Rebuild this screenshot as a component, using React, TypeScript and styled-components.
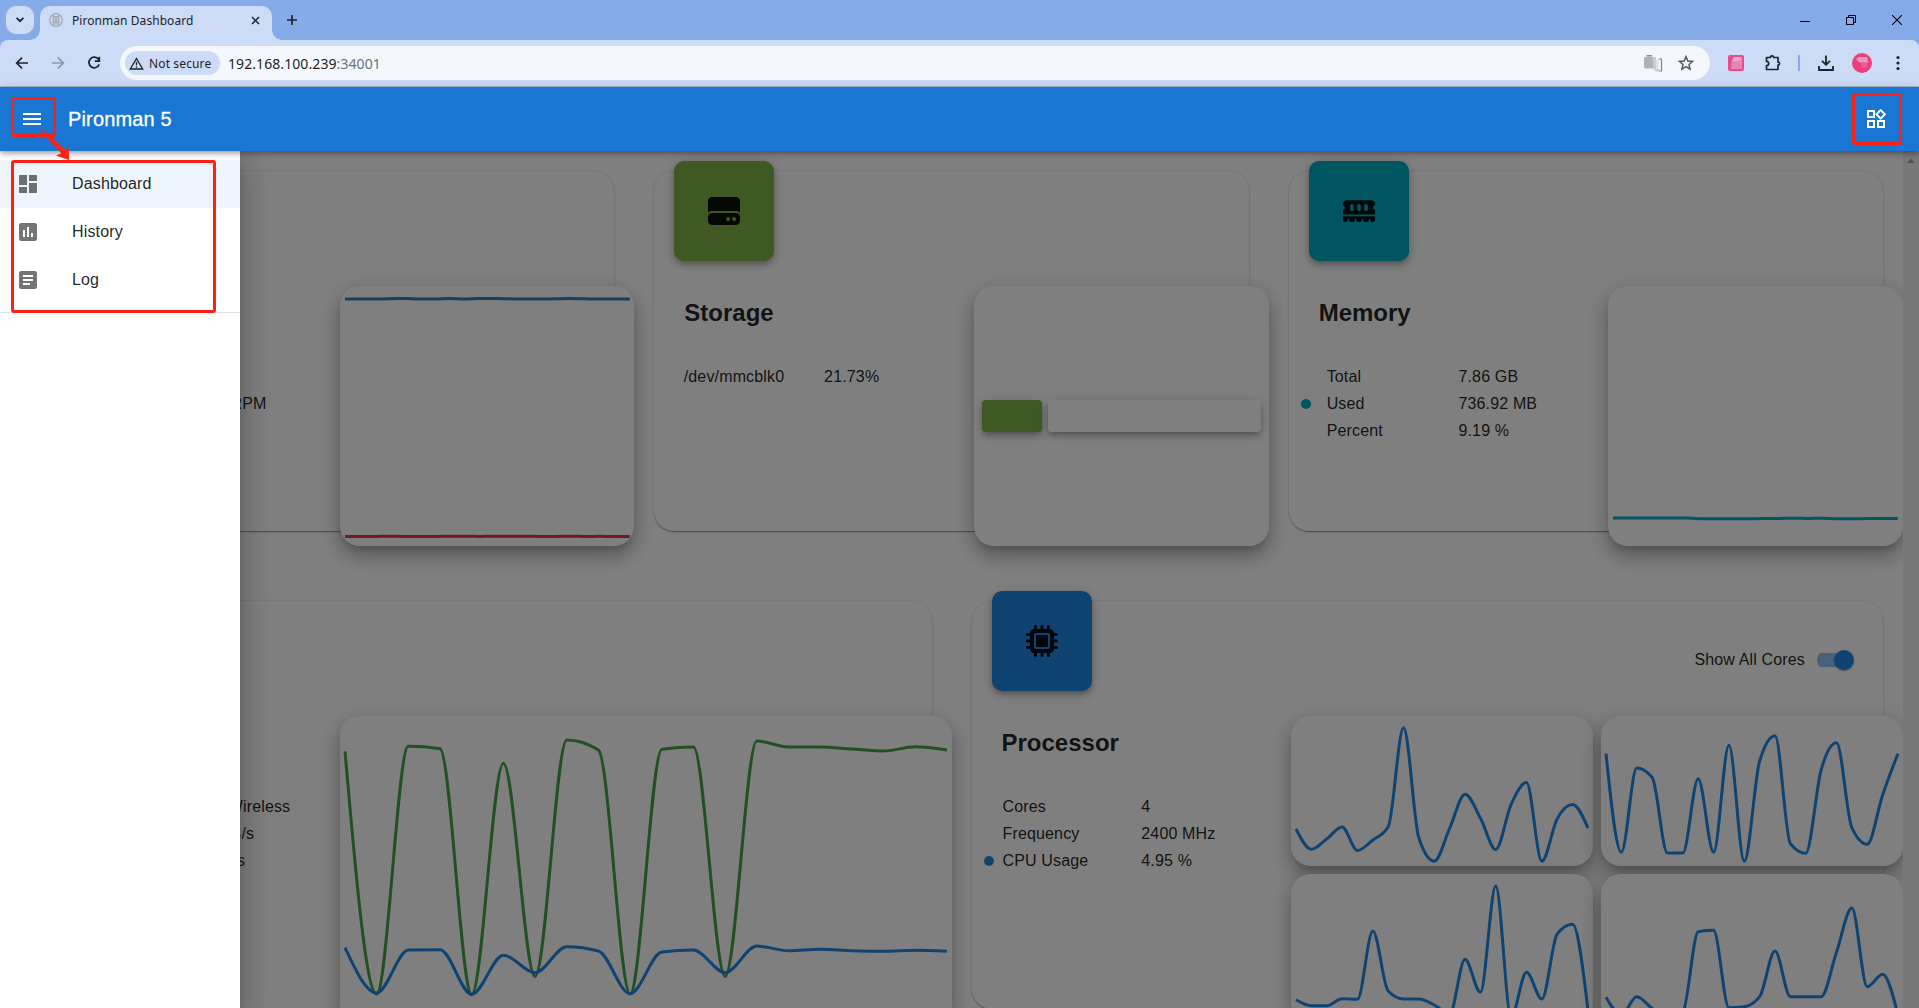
import React from "react";
import styled, { createGlobalStyle } from "styled-components";
import { FaHardDrive, FaMemory, FaMicrochip } from "react-icons/fa6";
import {
  MdArticle,
  MdAssessment,
  MdDashboard,
  MdMenu,
  MdOutlineWidgets,
} from "react-icons/md";

const palette = {
  frame: "#85abe9",
  toolbar: "#ccdcf6",
  omnibox: "#f4f8fd",
  ink: "#1f2329",
  primary: "#1976d2",
  blue: "#1e88e5",
  green: "#43a047",
  lime: "#7cb342",
  teal: "#00acc1",
  red: "#e53935",
  steel: "#2b82bd",
  mark: "#fe2113",
};

const elevation = {
  card: "0 2px 1px -1px rgba(0,0,0,.2), 0 1px 1px 0 rgba(0,0,0,.14), 0 1px 3px 0 rgba(0,0,0,.12)",
  paper: "0 2px 1px -1px rgba(0,0,0,.2), 0 1px 1px 0 rgba(0,0,0,.14), 0 1px 3px 0 rgba(0,0,0,.12), 0 0 2px 0 rgba(0,0,0,.12)",
  bar: "0 2px 4px -1px rgba(0,0,0,.2), 0 4px 5px 0 rgba(0,0,0,.14), 0 1px 10px 0 rgba(0,0,0,.12)",
  tile: "0 3px 5px -1px rgba(0,0,0,.2), 0 5px 8px 0 rgba(0,0,0,.14), 0 1px 14px 0 rgba(0,0,0,.12)",
  chart: "0 7px 8px -4px rgba(0,0,0,.2), 0 12px 17px 2px rgba(0,0,0,.14), 0 5px 22px 4px rgba(0,0,0,.12)",
  drawer: "0 8px 10px -5px rgba(0,0,0,.2), 0 16px 24px 2px rgba(0,0,0,.14), 0 6px 30px 5px rgba(0,0,0,.12)",
};

const GlobalStyle = createGlobalStyle`
  * { box-sizing: border-box; }
  body {
    margin: 0;
    overflow: hidden;
    font-family: "Liberation Sans", Arial, sans-serif;
  }
`;

const Screen = styled.div`
  position: relative;
  display: flex;
  flex-direction: column;
  width: 1919px;
  height: 1008px;
  overflow: hidden;
  background: #fff;
`;

/* ---------- browser window ---------- */

const BrowserFrame = styled.header`
  flex: none;
  height: 87px;
  background: ${palette.frame};
  font-family: "Noto Sans", "Open Sans", sans-serif;
  color: ${palette.ink};
`;

const TabStrip = styled.div`
  display: flex;
  align-items: center;
  height: 40px;
  padding-left: 6px;
`;

const TabSearch = styled.div`
  display: grid;
  place-items: center;
  width: 28px;
  height: 28px;
  border-radius: 10px;
  background: ${palette.toolbar};
`;

const Tab = styled.div`
  position: relative;
  display: flex;
  align-items: center;
  align-self: flex-end;
  width: 232px;
  height: 34px;
  margin-left: 6px;
  padding: 0 12px 6px 9px;
  border-radius: 10px 10px 0 0;
  background: ${palette.toolbar};

  &::before,
  &::after {
    content: "";
    position: absolute;
    bottom: 0;
    width: 10px;
    height: 10px;
  }
  &::before {
    left: -10px;
    background: radial-gradient(circle at 0 0, transparent 9.5px, ${palette.toolbar} 10px);
  }
  &::after {
    right: -10px;
    background: radial-gradient(circle at 100% 0, transparent 9.5px, ${palette.toolbar} 10px);
  }
`;

const TabTitle = styled.span`
  flex: 1;
  margin-left: 9px;
  padding-top: 1px;
  font-size: 12px;
  line-height: 16px;
  letter-spacing: 0.06px;
  white-space: nowrap;
`;

const NewTab = styled.div`
  display: grid;
  margin-left: 14px;
`;

const WindowControls = styled.div`
  display: flex;
  align-items: center;
  gap: 36px;
  margin-left: auto;
  padding-right: 17px;
`;

const AddressRow = styled.div`
  display: flex;
  align-items: center;
  height: 47px;
  padding: 0 12px 0 13px;
  border-bottom: 1px solid #aab6cb;
  border-radius: 8px 8px 0 0;
  background: ${palette.toolbar};
`;

const NavButtons = styled.div`
  display: flex;
  gap: 18px;
`;

const Omnibox = styled.div`
  display: flex;
  align-items: center;
  width: 1590px;
  height: 34px;
  margin-left: 17px;
  padding: 0 15px 0 5px;
  border-radius: 17px;
  background: ${palette.omnibox};
`;

const SecurityChip = styled.div`
  display: flex;
  align-items: center;
  gap: 5px;
  width: 95px;
  height: 24px;
  padding-left: 4px;
  border-radius: 12px;
  background: ${palette.toolbar};
  font-size: 12px;
  letter-spacing: 0.13px;
  white-space: nowrap;
`;

const Url = styled.span`
  flex: 1;
  margin-left: 8px;
  font-size: 14px;
  letter-spacing: 0.08px;
`;

const Port = styled.span`
  color: #6b7078;
`;

const OmniboxIcons = styled.div`
  display: flex;
  align-items: center;
  gap: 14px;
`;

const Extensions = styled.div`
  display: flex;
  align-items: center;
  margin-left: 18px;
`;

const ExtensionBadge = styled.div`
  display: grid;
  place-items: center;
  width: 16px;
  height: 16px;
  border-radius: 2px;
  background: #e94b8b;
`;

const PuzzleSlot = styled.div`
  display: grid;
  margin-left: 20px;
`;

const ToolDivider = styled.div`
  width: 2px;
  height: 16px;
  margin-left: 16px;
  background: ${palette.frame};
`;

const DownloadSlot = styled.div`
  display: grid;
  margin-left: 17px;
`;

const Avatar = styled.div`
  display: grid;
  place-items: center;
  width: 20px;
  height: 20px;
  margin-left: 17px;
  border-radius: 50%;
  background: #ee3f7c;
`;

const KebabSlot = styled.div`
  display: grid;
  margin-left: 18px;
`;

/* ---------- app bar ---------- */

const AppBar = styled.nav`
  position: relative;
  z-index: 4;
  flex: none;
  display: flex;
  align-items: center;
  height: 64px;
  padding: 0 31px 0 20px;
  background: ${palette.primary};
  box-shadow: ${elevation.bar};
  color: #fff;
`;

const AppTitle = styled.h1`
  flex: 1;
  margin: 0 0 0 24px;
  font-size: 20px;
  font-weight: 500;
  line-height: 32px;
  letter-spacing: 0.15px;
  -webkit-text-stroke: 0.3px #fff;
`;

/* ---------- page ---------- */

const Page = styled.div`
  position: relative;
  flex: 1;
  display: flex;
  min-height: 0;
  overflow: hidden;
`;

const Dashboard = styled.main`
  display: flex;
  flex-direction: column;
  gap: 70px;
  width: 1903px;
  height: 857px;
  padding: 20px 20px 0;
  overflow: hidden;
`;

const CardRow = styled.section<{ $columns: number }>`
  flex: none;
  display: grid;
  grid-template-columns: repeat(${(p) => p.$columns}, minmax(0, 1fr));
  column-gap: 40px;
`;

const CardBox = styled.article`
  display: flex;
  flex-direction: column;
  border-radius: 20px;
  background: #fff;
  box-shadow: ${elevation.paper};
  color: rgba(0, 0, 0, 0.87);
`;

const CardHead = styled.div`
  display: flex;
  justify-content: space-between;
  height: 115px;
  padding: 0 20px;
`;

const Tile = styled.div<{ $color: string }>`
  display: grid;
  place-items: center;
  width: 100px;
  height: 100px;
  margin-top: -10px;
  border-radius: 10px;
  background: ${(p) => p.$color};
  box-shadow: ${elevation.tile};
  color: rgba(0, 0, 0, 0.9);

  svg {
    width: auto;
    height: 32px;
  }
`;

const CardBody = styled.div`
  flex: 1;
  display: grid;
  grid-template-columns: 319.6px minmax(0, 1fr);
  margin: 0 -20px -15px 0;
`;

const Summary = styled.div`
  padding-top: 11px;
`;

const CardTitle = styled.h2`
  height: 32px;
  margin: 0 0 34px 30px;
  font-size: 24px;
  font-weight: 700;
  line-height: 32px;
`;

const Stat = styled.div<{ $inset: number }>`
  display: grid;
  grid-template-columns: ${(p) => p.$inset - 12}px ${(p) => 169.8 - p.$inset}px 1fr;
  align-items: center;
  height: 27px;
  padding-left: 12px;
  font-size: 16px;
  line-height: 27px;
  letter-spacing: 0.15px;
  white-space: nowrap;
`;

const Dot = styled.i<{ $color?: string }>`
  width: 10px;
  height: 10px;
  border-radius: 50%;
  background: ${(p) => p.$color ?? "transparent"};
`;

const ChartPanel = styled.div<{ $height?: number }>`
  height: ${(p) => (p.$height ? `${p.$height}px` : "100%")};
  border-radius: 20px;
  background: #fff;
  box-shadow: ${elevation.chart};
  overflow: hidden;

  svg {
    display: block;
  }
`;

const StoragePanel = styled(ChartPanel)`
  display: flex;
  align-items: center;
  gap: 6px;
  padding: 0 8px;
`;

const UsageBlock = styled.div<{ $color: string; $grow: number }>`
  flex: ${(p) => p.$grow} 1 0;
  height: 32px;
  border-radius: 4px;
  background: ${(p) => p.$color};
  box-shadow: ${elevation.tile};
`;

const CoreGrid = styled.div`
  display: grid;
  grid-template-columns: 1fr 1fr;
  gap: 8px;
`;

const ToggleRow = styled.div`
  display: flex;
  align-items: center;
  align-self: flex-start;
  gap: 12px;
  height: 38px;
  margin-top: 40px;
  padding-right: 9px;
  font-size: 16px;
  letter-spacing: 0.15px;
`;

const SwitchTrack = styled.div`
  display: flex;
  align-items: center;
  justify-content: flex-end;
  width: 37px;
  height: 20px;
  border-radius: 10px;
  background: linear-gradient(rgba(30, 136, 229, 0.5), rgba(30, 136, 229, 0.5)) 0 3px / 34px 14px no-repeat;
`;

const SwitchThumb = styled.div`
  width: 20px;
  height: 20px;
  border-radius: 50%;
  background: ${palette.blue};
  box-shadow: ${elevation.card};
`;

const ScrollTrack = styled.div`
  display: flex;
  justify-content: center;
  width: 16px;
  padding-top: 7px;
  background: #f1f1f1;
`;

const Backdrop = styled.div`
  position: absolute;
  inset: 0;
  z-index: 2;
  background: rgba(0, 0, 0, 0.5);
`;

const Drawer = styled.aside`
  position: absolute;
  inset: 0 auto 0 0;
  z-index: 3;
  width: 240px;
  background: #fff;
  box-shadow: ${elevation.drawer};
`;

const DrawerList = styled.ul`
  margin: 0;
  padding: 9px 0 8px;
  border-bottom: 1px solid rgba(0, 0, 0, 0.12);
  list-style: none;
`;

const DrawerItem = styled.li<{ $active?: boolean }>`
  display: flex;
  align-items: center;
  gap: 32px;
  height: 48px;
  padding: 0 16px;
  background: ${(p) => (p.$active ? "rgba(25, 118, 210, 0.08)" : "transparent")};
  color: rgba(0, 0, 0, 0.87);
  font-size: 16px;
  line-height: 24px;
  letter-spacing: 0.15px;

  svg {
    color: rgba(0, 0, 0, 0.54);
  }
`;

/* ---------- call-outs drawn over the window ---------- */

const Callout = styled.div<{ $x: number; $y: number; $w: number; $h: number }>`
  position: absolute;
  z-index: 6;
  left: ${(p) => p.$x}px;
  top: ${(p) => p.$y}px;
  width: ${(p) => p.$w}px;
  height: ${(p) => p.$h}px;
  border: 3px solid ${palette.mark};
  border-radius: 3px;
`;

const CalloutArrow = styled.svg`
  position: absolute;
  z-index: 6;
  left: 36px;
  top: 124px;
`;

/* ---------- charts ---------- */

type Point = [number, number];

/** Monotone cubic interpolation along x, so peaks never overshoot their samples. */
function monotonePath(points: Point[]): string {
  const n = points.length;
  const slope = points
    .slice(1)
    .map((p, i) => (p[1] - points[i][1]) / (p[0] - points[i][0]));
  const tangent: number[] = new Array(n).fill(0);
  for (let i = 1; i < n - 1; i++) {
    const a = slope[i - 1];
    const b = slope[i];
    const mean = (a + b) / 2;
    tangent[i] =
      (Math.sign(a) + Math.sign(b)) *
      Math.min(Math.abs(a), Math.abs(b), 0.5 * Math.abs(mean));
  }
  tangent[0] = (3 * slope[0] - tangent[1]) / 2;
  tangent[n - 1] = (3 * slope[n - 2] - tangent[n - 2]) / 2;

  let d = `M${points[0][0]},${points[0][1]}`;
  for (let i = 1; i < n; i++) {
    const [x0, y0] = points[i - 1];
    const [x1, y1] = points[i];
    const dx = (x1 - x0) / 3;
    d += `C${x0 + dx},${y0 + dx * tangent[i - 1]} ${x1 - dx},${y1 - dx * tangent[i]} ${x1},${y1}`;
  }
  return d;
}

interface Series {
  color: string;
  values: number[];
}

function LineChart({ width, height, series }: { width: number; height: number; series: Series[] }) {
  return (
    <svg width={width} height={height} fill="none">
      {series.map((s, i) => (
        <path
          key={i}
          stroke={s.color}
          strokeWidth={3}
          d={monotonePath(
            s.values.map((v, k): Point => [
              5 + ((width - 10) * k) / (s.values.length - 1),
              v,
            ]),
          )}
        />
      ))}
    </svg>
  );
}

const temperature: Series[] = [
  { color: palette.steel, values: [13, 13, 13, 12.8, 12.4, 13, 13, 12.4, 13, 12.6, 12.6, 12.8, 13, 13, 12.8, 12.6, 12.8, 13, 13, 13] },
  { color: palette.red, values: [250.5, 250.5, 250.5, 250.2, 250.5, 250.5, 250.5, 250.2, 250.2, 250.5, 250.2, 250.2, 250.2, 250.5, 250.5, 250.2, 250.5, 250.3, 250.5, 250.5] },
];

const memoryUse: Series[] = [
  { color: palette.teal, values: [232, 232, 232, 232, 232, 232, 232.8, 232.8, 232.8, 232.8, 232.5, 232.5, 232.2, 232.5, 232.2, 232.8, 232.8, 232.5, 232.5, 232.5] },
];

const traffic: Series[] = [
  { color: palette.green, values: [35.3, 278, 30.3, 32.7, 278.7, 47.3, 260.5, 24, 34, 278, 33.3, 31, 260.5, 25, 31, 31, 33, 35, 30.7, 34] },
  { color: palette.blue, values: [231.7, 277, 234, 233.7, 278.3, 239.3, 256.7, 230.7, 235, 277.7, 236, 234, 256.7, 230, 234.7, 233.3, 234.7, 235.3, 234.3, 235.3] },
];

const cores: number[][] = [
  [113, 133.3, 123, 111, 134.5, 124, 110.7, 11.7, 122.3, 145.2, 112.3, 78.3, 102, 133.5, 88.3, 66.5, 145.2, 102.7, 88.5, 112],
  [37.7, 136.3, 52, 61.3, 137, 137, 62.7, 136.3, 29.3, 145.3, 45, 19.7, 127.7, 137.3, 54, 26.7, 111.7, 128.3, 79, 37.7],
  [125.7, 131.7, 131.7, 124.7, 125.3, 57, 117, 125, 125, 131, 140, 85.3, 118.3, 12, 143, 98.3, 125, 60, 50.3, 136],
  [123.3, 141, 122.7, 134.3, 144, 138, 57.7, 56.3, 133.7, 132.7, 122.7, 77, 122.7, 122.7, 122.7, 78.3, 34, 112.7, 100.3, 141],
];

/* ---------- cards ---------- */

interface StatData {
  label?: string;
  value: string;
  dot?: string;
}

interface CardProps {
  icon?: React.ReactNode;
  color?: string;
  title?: string;
  inset?: number;
  stats: StatData[];
  action?: React.ReactNode;
  children: React.ReactNode;
}

function Card({ icon, color, title, inset = 29.4, stats, action, children }: CardProps) {
  return (
    <CardBox>
      <CardHead>
        {color && <Tile $color={color}>{icon}</Tile>}
        {action}
      </CardHead>
      <CardBody>
        <Summary>
          <CardTitle>{title}</CardTitle>
          {stats.map((s, i) => (
            <Stat key={i} $inset={inset}>
              <Dot $color={s.dot} />
              <span>{s.label}</span>
              <span>{s.value}</span>
            </Stat>
          ))}
        </Summary>
        {children}
      </CardBody>
    </CardBox>
  );
}

/* ---------- browser glyphs ---------- */

const Globe = () => (
  <svg width="14" height="14" viewBox="0 0 14 14" fill="none" stroke="#a3a9b1" strokeWidth="1.2">
    <circle cx="7" cy="7" r="6.3" />
    <path d="M4.2 1.6V12.4M9.8 1.6V12.4M7 3V11.5M4.2 3.6H9.8M4.2 6.2H9.8M4.2 8.6H9.8M5 11H9" />
  </svg>
);

function BrowserChrome() {
  return (
    <BrowserFrame>
      <TabStrip>
        <TabSearch>
          <svg width="8" height="6" viewBox="0 0 8 6" fill="none" stroke={palette.ink} strokeWidth="1.8">
            <path d="M.6.9 4 4.2 7.4.9" />
          </svg>
        </TabSearch>
        <Tab>
          <Globe />
          <TabTitle>Pironman Dashboard</TabTitle>
          <svg width="9" height="9" viewBox="0 0 9 9" stroke={palette.ink} strokeWidth="1.5">
            <path d="M1 1 8 8M8 1 1 8" />
          </svg>
        </Tab>
        <NewTab>
          <svg width="12" height="12" viewBox="0 0 12 12" stroke={palette.ink} strokeWidth="1.7">
            <path d="M6 1V11M1 6H11" />
          </svg>
        </NewTab>
        <WindowControls>
          <svg width="10" height="11" viewBox="0 0 10 11" stroke="#000">
            <path d="M0 6.5H10" />
          </svg>
          <svg width="10" height="10" viewBox="0 0 10 10" fill="none" stroke="#000">
            <path d="M.5 2.5H7.5V9.5H.5ZM2.5 2.5V.5H9.5V7.5H7.5" />
          </svg>
          <svg width="10" height="10" viewBox="0 0 10 10" stroke="#000" strokeWidth="1.1">
            <path d="M0 0 10 10M10 0 0 10" />
          </svg>
        </WindowControls>
      </TabStrip>
      <AddressRow>
        <NavButtons>
          <svg width="18" height="18" viewBox="0 0 18 18" fill="none" stroke={palette.ink} strokeWidth="1.7">
            <path d="M15 9H4.2M9 3.7 3.7 9 9 14.3" />
          </svg>
          <svg width="18" height="18" viewBox="0 0 18 18" fill="none" stroke="#8c97a8" strokeWidth="1.7">
            <path d="M3 9H13.8M9 3.7 14.3 9 9 14.3" />
          </svg>
          <svg width="18" height="18" viewBox="0 0 18 18" fill="none" stroke={palette.ink} strokeWidth="1.7">
            <path d="M13.6 5.4A5.3 5.3 0 1 0 14.2 10.4M14.3 2.8V7.2H9.8" />
          </svg>
        </NavButtons>
        <Omnibox>
          <SecurityChip>
            <svg width="15" height="13" viewBox="0 0 15 13" fill="none" stroke={palette.ink} strokeWidth="1.3">
              <path d="M7.5 1.6 13.7 12H1.3ZM7.5 5V8.3M7.5 9.3V10.7" />
            </svg>
            Not secure
          </SecurityChip>
          <Url>
            192.168.100.239<Port>:34001</Port>
          </Url>
          <OmniboxIcons>
            <svg width="19" height="17" viewBox="0 0 19 17" fill="none">
              <path d="M2.5 .8H8" stroke="#6b7078" strokeWidth="1.2" />
              <path d="M1 2H9L12 13.5H2Q0 13.5 0 12V3Q0 2 1 2Z" fill="#adb3b9" />
              <path d="M9 2H12V14H15V16.5H12L9 13.5Z" fill="#c9ced4" />
              <path d="M12 5H14.5V14H12Z" fill="#dfe3e8" />
              <path d="M14.5 4H17.5V16H15" stroke="#83898f" strokeWidth="1.2" />
            </svg>
            <svg width="18" height="18" viewBox="0 0 18 18" fill="none" stroke="#54585e" strokeWidth="1.5">
              <path d="M9 2.6 10.9 7 15.6 7.4 12 10.5 13.1 15.1 9 12.6 4.9 15.1 6 10.5 2.4 7.4 7.1 7Z" />
            </svg>
          </OmniboxIcons>
        </Omnibox>
        <Extensions>
          <ExtensionBadge>
            <svg width="14" height="14" viewBox="0 0 14 14">
              <path d="M3 5 7 1H13V13H2Z" fill="#e884b4" />
              <path d="M5 1H12V4L9 5H4L2 7Z" fill="#dda9cf" />
            </svg>
          </ExtensionBadge>
          <PuzzleSlot>
            <svg width="18" height="18" viewBox="0 0 18 18" fill="none" stroke={palette.ink} strokeWidth="1.7">
              <path d="M2.5 3.5H6.3A1.7 1.7 0 0 1 9.7 3.5H14V8A1.6 1.6 0 0 1 14 11.2V15.5H2.5V11.7A2.2 2.2 0 0 0 2.5 7.3Z" strokeLinejoin="round" />
            </svg>
          </PuzzleSlot>
          <ToolDivider />
          <DownloadSlot>
            <svg width="18" height="18" viewBox="0 0 18 18" fill="none" stroke={palette.ink} strokeWidth="1.8">
              <path d="M9 1.5V10.5M5 6.8 9 10.8 13 6.8M2 12V16H16V12" />
            </svg>
          </DownloadSlot>
          <Avatar>
            <svg width="16" height="16" viewBox="0 0 16 16">
              <path d="M2 4 5 2H13L14 8H8L5 7Z" fill="#e79ac4" />
              <path d="M7 7H13V12L8 13Z" fill="#ea5d96" />
            </svg>
          </Avatar>
          <KebabSlot>
            <svg width="16" height="16" viewBox="0 0 16 16" fill={palette.ink}>
              <circle cx="8" cy="2.5" r="1.6" />
              <circle cx="8" cy="8" r="1.6" />
              <circle cx="8" cy="13.5" r="1.6" />
            </svg>
          </KebabSlot>
        </Extensions>
      </AddressRow>
    </BrowserFrame>
  );
}

export default function App() {
  return (
    <>
      <GlobalStyle />
      <Screen>
        <BrowserChrome />
        <AppBar>
          <MdMenu size={24} />
          <AppTitle>Pironman 5</AppTitle>
          <MdOutlineWidgets size={24} />
        </AppBar>
        <Page>
          <Dashboard>
            <CardRow $columns={3}>
              <Card stats={[{ value: "" }, { value: "2929 RPM" }]}>
                <ChartPanel $height={260}>
                  <LineChart width={294.73} height={260} series={temperature} />
                </ChartPanel>
              </Card>
              <Card
                icon={<FaHardDrive />}
                color={palette.lime}
                title="Storage"
                stats={[{ label: "/dev/mmcblk0", value: "21.73%" }]}
              >
                <StoragePanel $height={260}>
                  <UsageBlock $color={palette.lime} $grow={22} />
                  <UsageBlock $color="#fff" $grow={78} />
                </StoragePanel>
              </Card>
              <Card
                icon={<FaMemory />}
                color={palette.teal}
                title="Memory"
                inset={38}
                stats={[
                  { label: "Total", value: "7.86 GB" },
                  { label: "Used", value: "736.92 MB", dot: palette.teal },
                  { label: "Percent", value: "9.19 %" },
                ]}
              >
                <ChartPanel $height={260}>
                  <LineChart width={294.73} height={260} series={memoryUse} />
                </ChartPanel>
              </Card>
            </CardRow>
            <CardRow $columns={2}>
              <Card stats={[{ value: "USB Wireless" }, { value: "1012 B/s" }, { value: "141 B/s" }]}>
                <ChartPanel>
                  <LineChart width={611.9} height={308} series={traffic} />
                </ChartPanel>
              </Card>
              <Card
                icon={<FaMicrochip />}
                color={palette.blue}
                title="Processor"
                inset={31}
                stats={[
                  { label: "Cores", value: "4" },
                  { label: "Frequency", value: "2400 MHz" },
                  { label: "CPU Usage", value: "4.95 %", dot: palette.blue },
                ]}
                action={
                  <ToggleRow>
                    Show All Cores
                    <SwitchTrack>
                      <SwitchThumb />
                    </SwitchTrack>
                  </ToggleRow>
                }
              >
                <CoreGrid>
                  {cores.map((values, i) => (
                    <ChartPanel key={i} $height={150}>
                      <LineChart width={301.95} height={150} series={[{ color: palette.blue, values }]} />
                    </ChartPanel>
                  ))}
                </CoreGrid>
              </Card>
            </CardRow>
          </Dashboard>
          <ScrollTrack>
            <svg width="8" height="5" viewBox="0 0 8 5" fill="#a3a3a3">
              <path d="M4 .5 8 5H0Z" />
            </svg>
          </ScrollTrack>
          <Backdrop />
          <Drawer>
            <DrawerList>
              <DrawerItem $active>
                <MdDashboard size={24} />
                Dashboard
              </DrawerItem>
              <DrawerItem>
                <MdAssessment size={24} />
                History
              </DrawerItem>
              <DrawerItem>
                <MdArticle size={24} />
                Log
              </DrawerItem>
            </DrawerList>
          </Drawer>
        </Page>
        <Callout $x={11} $y={97} $w={45} $h={40} />
        <Callout $x={11} $y={160} $w={205} $h={153} />
        <Callout $x={1852} $y={93} $w={50} $h={52} />
        <CalloutArrow width="38" height="40" viewBox="36 124 38 40" fill={palette.mark}>
          <path d="M40 127.5 51 136.5 65.5 150.5 68.7 147.3 69 160 56 155.4 61.2 153.3 47.5 139Z" />
        </CalloutArrow>
      </Screen>
    </>
  );
}
